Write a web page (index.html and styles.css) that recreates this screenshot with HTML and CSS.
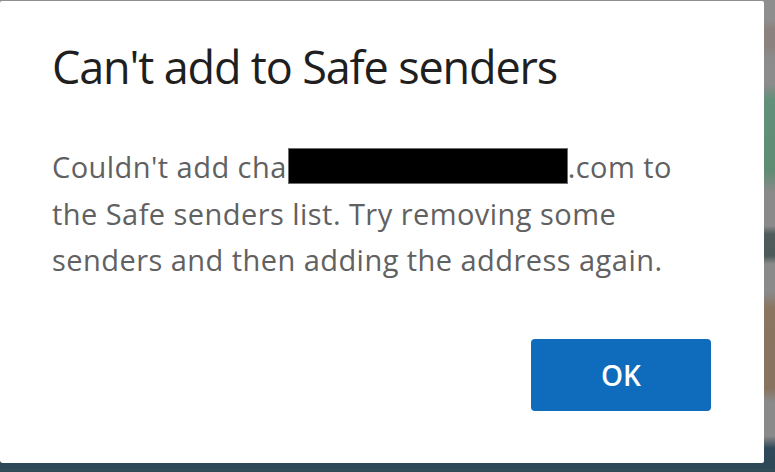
FILE: index.html
```html
<!DOCTYPE html>
<html lang="en">
<head>
<meta charset="utf-8">
<title>Can't add to Safe senders</title>
<link rel="stylesheet" href="styles.css">
</head>
<body>
<div class="screen">
  <div class="dialog" role="dialog" aria-labelledby="dlg-title">
    <h1 class="dialog-title" id="dlg-title">Can't add to Safe senders</h1>
    <p class="dialog-text">Couldn't add cha<span class="redacted" aria-label="redacted"></span>.com to the Safe senders list. Try removing some senders and then adding the address again.</p>
    <div class="dialog-actions">
      <button class="btn-primary" type="button">OK</button>
    </div>
  </div>
</div>
</body>
</html>
```
FILE: styles.css
```css
html, body {
  margin: 0;
  padding: 0;
}

body {
  width: 775px;
  height: 472px;
  overflow: hidden;
  font-family: "Open Sans", "Noto Sans", "Liberation Sans", sans-serif;
}

.screen {
  width: 775px;
  height: 472px;
  box-sizing: border-box;
  padding-top: 1px;
  background:
    linear-gradient(to top, #2e4653 0, #34505c 3px, transparent 3px),
    linear-gradient(to bottom,
      #8e8e8e 0, #8e8e8e 20px,
      #8b817e 30px, #8b817e 46px,
      #8c8c8c 58px, #8c8c8c 84px,
      #62907a 100px, #5e8c73 170px,
      #8a8a8a 192px, #8a8a8a 226px,
      #4f5b5b 234px, #4d5a5a 256px,
      #8a8a8a 264px, #8a8a8a 292px,
      #8a7561 308px, #87735f 388px,
      #8a8a8a 402px, #8a8a8a 436px,
      #30495a 448px, #2e4757 472px);
}

.dialog {
  width: 764px;
  height: 462px;
  box-sizing: border-box;
  background: #ffffff;
  border-radius: 2px 2px 2px 3px;
  padding: 36px 53px 52px 52px;
  display: flex;
  flex-direction: column;
}

.dialog-title {
  margin: 0;
  font-size: 45px;
  line-height: 60px;
  font-weight: 400;
  color: #1f1f1f;
  letter-spacing: -1.15px;
  white-space: nowrap;
}

.dialog-text {
  margin: 47px 0 0 0;
  width: 640px;
  font-size: 29px;
  line-height: 46.5px;
  color: #616161;
  letter-spacing: 0.45px;
}

.redacted {
  display: inline-block;
  width: 278px;
  height: 34px;
  background: #000000;
  border: 1px solid #6e6e6e;
  vertical-align: -6px;
  margin-left: 1px;
}

.dialog-actions {
  margin-top: auto;
  display: flex;
  justify-content: flex-end;
}

.btn-primary {
  width: 180px;
  height: 72px;
  border: none;
  border-radius: 4px;
  background: #0f6cbd;
  color: #ffffff;
  font-family: inherit;
  font-size: 28px;
  font-weight: 600;
  cursor: pointer;
  padding: 0;
}
```
